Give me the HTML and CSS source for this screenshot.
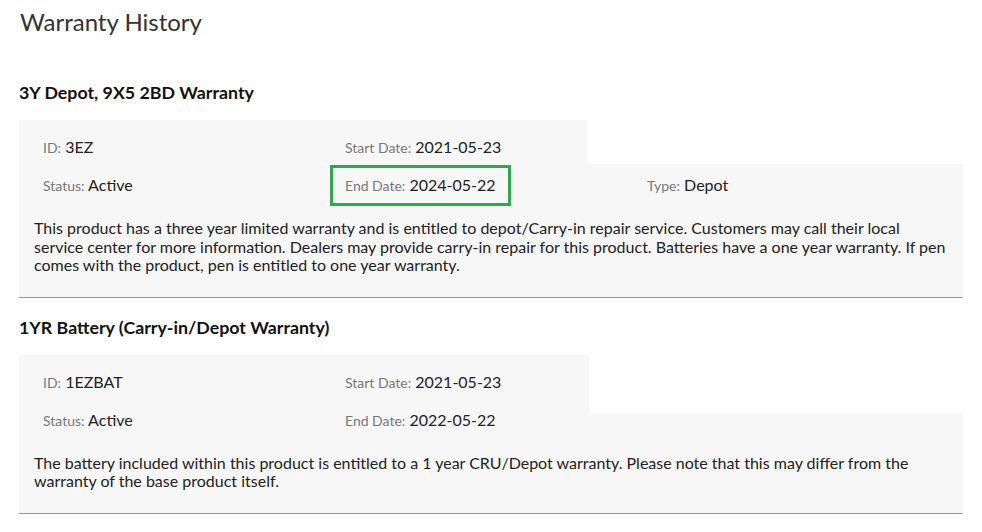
FILE: index.html
```html
<!DOCTYPE html>
<html lang="en">
<head>
    <meta charset="UTF-8">
    <meta name="viewport" content="width=device-width, initial-scale=1.0">
    <title>Warranty History</title>
    <link rel="stylesheet" href="styles.css">
</head>
<body>
    <div class="page">
        <h1>Warranty History</h1>

        <h2>3Y Depot, 9X5 2BD Warranty</h2>
        <div class="card">
            <div class="fields">
                <div class="field"><span class="label">ID:</span> 3EZ</div>
                <div class="field"><span class="label">Start Date:</span> 2021-05-23</div>
                <div class="field"></div>
                <div class="field"><span class="label">Status:</span> Active</div>
                <div class="field highlight"><span class="label">End Date:</span> 2024-05-22</div>
                <div class="field"><span class="label">Type:</span> Depot</div>
            </div>
            <p class="desc">This product has a three year limited warranty and is entitled to depot/Carry-in repair service. Customers may call their local service center for more information. Dealers may provide carry-in repair for this product. Batteries have a one year warranty. If pen comes with the product, pen is entitled to one year warranty.</p>
        </div>

        <h2>1YR Battery (Carry-in/Depot Warranty)</h2>
        <div class="card tall">
            <div class="fields">
                <div class="field"><span class="label">ID:</span> 1EZBAT</div>
                <div class="field"><span class="label">Start Date:</span> 2021-05-23</div>
                <div class="field"></div>
                <div class="field"><span class="label">Status:</span> Active</div>
                <div class="field"><span class="label">End Date:</span> 2022-05-22</div>
                <div class="field"></div>
            </div>
            <p class="desc">The battery included within this product is entitled to a 1 year CRU/Depot warranty. Please note that this may differ from the warranty of the base product itself.</p>
        </div>
    </div>
</body>
</html>
```

FILE: styles.css
```css
body { margin: 0; font-family: Lato, "Open Sans", sans-serif; color: #222; background: #fff; }
.page { padding-left: 19px; width: 944px; }
h1 { font-size: 24px; font-weight: 400; line-height: 30px; color: #333; margin: 7px 0 0 1px; }
h2 { font-size: 17.8px; font-weight: 700; line-height: 22px; color: #111; margin: 18px 0 17px; }
h1 + h2 { margin-top: 44px; }
.card { position: relative; background: #f7f7f7; border-bottom: 1px solid #999; padding: 17px 0 22px; }
/* white notch right of the first row */
.card::before { content: ""; position: absolute; top: 0; right: 0; width: 376px; height: 44px; background: #fff; }
.card.tall::before { height: 58px; width: 374px; }
.fields { position: relative; display: grid; grid-template-columns: 302px 302px 1fr; row-gap: 17px; padding-left: 24px; }
.field { font-size: 16px; line-height: 20px; white-space: nowrap; }
.label { font-size: 14px; color: #777; }
.highlight { justify-self: start; outline: 3px solid #2ea84a; margin: -7px 0 -7px -12px; padding: 7px 12px; }
.desc { position: relative; margin: 23px 0 0; padding: 0 12px 0 15px; font-size: 16px; line-height: 18.5px; }
```
